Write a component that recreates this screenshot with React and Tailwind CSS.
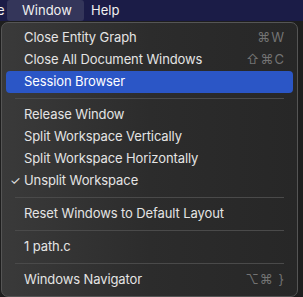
import React from "react";

const Sep = () => (
  <div className="h-[11px] flex items-center px-[13px]">
    <div className="h-px w-full bg-[#4a4a4a]" />
  </div>
);

const Item = ({ label, shortcut, active, checked }) => (
  <div
    className={
      "relative h-[22px] mx-[4px] rounded-[4px] flex items-center pl-[18px] pr-[8px] " +
      (active ? "bg-[#2b56c6] text-white" : "text-[#e4e4e4]")
    }
  >
    {checked && (
      <span className="absolute left-[4px] top-[3px] text-[12px] leading-[16px]">✓</span>
    )}
    <span className="flex-1 whitespace-nowrap tracking-[-0.1px]">{label}</span>
    {shortcut && (
      <span className="text-[#737373] tracking-[1px] whitespace-nowrap">{shortcut}</span>
    )}
  </div>
);

export default function App() {
  return (
    <div
      className="w-[303px] h-[297px] bg-[#1e1e1e] overflow-hidden text-[13px]"
      style={{ fontFamily: "Inter, 'Noto Sans', sans-serif" }}
    >
      <div className="h-[21px] bg-[#1b1c47] flex items-center text-[#f0f0f0] text-[13px]">
        <span className="w-[10px] -ml-[3px]">e</span>
        <div className="h-full w-[77px] bg-[#34365a] flex items-center pl-[15px] rounded-[3px]">
          Window
        </div>
        <span className="ml-[7px]">Help</span>
      </div>
      <div className="ml-[1px] mt-[1px] w-[297px] h-[275px] rounded-[7px] border border-[#555] bg-gradient-to-r from-[#3a3a3a] via-[#2c2c2c] to-[#272727] pt-[4px]">
        <Item label="Close Entity Graph" shortcut="⌘W" />
        <Item label="Close All Document Windows" shortcut="⇧⌘C" />
        <Item label="Session Browser" active />
        <Sep />
        <Item label="Release Window" />
        <Item label="Split Workspace Vertically" />
        <Item label="Split Workspace Horizontally" />
        <Item label="Unsplit Workspace" checked />
        <Sep />
        <Item label="Reset Windows to Default Layout" />
        <Sep />
        <Item label="1 path.c" />
        <Sep />
        <Item label="Windows Navigator" shortcut="⌥⌘ }" />
      </div>
    </div>
  );
}
